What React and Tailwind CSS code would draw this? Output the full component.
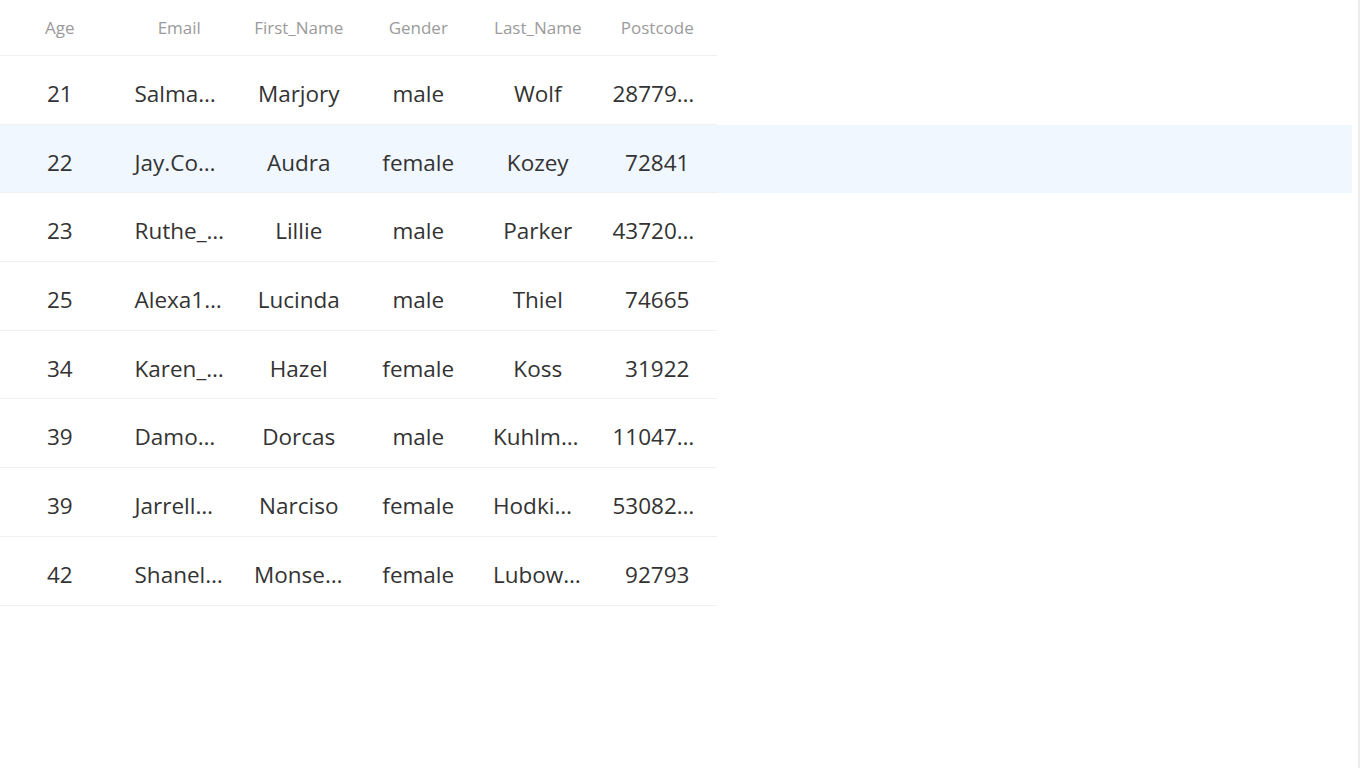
const columns = ['Age', 'Email', 'First_Name', 'Gender', 'Last_Name', 'Postcode'];

// visible (already clipped) cell text, as it shows in the grid
const rows = [
  ['21', 'Salma…', 'Marjory', 'male', 'Wolf', '28779…'],
  ['22', 'Jay.Co…', 'Audra', 'female', 'Kozey', '72841'],
  ['23', 'Ruthe_…', 'Lillie', 'male', 'Parker', '43720…'],
  ['25', 'Alexa1…', 'Lucinda', 'male', 'Thiel', '74665'],
  ['34', 'Karen_…', 'Hazel', 'female', 'Koss', '31922'],
  ['39', 'Damo…', 'Dorcas', 'male', 'Kuhlm…', '11047…'],
  ['39', 'Jarrell…', 'Narciso', 'female', 'Hodki…', '53082…'],
  ['42', 'Shanel…', 'Monse…', 'female', 'Lubow…', '92793'],
];

function Cell({ children, header }) {
  if (header) {
    return (
      <div className="w-[119.5px] shrink-0 px-[15px] text-center whitespace-nowrap text-[17px] text-[#9b9b9b]">
        {children}
      </div>
    );
  }
  const clipped = children.endsWith('…');
  return (
    <div
      className={
        clipped
          ? 'w-[119.5px] shrink-0 px-[15px] text-left whitespace-nowrap text-[22.5px] text-[#333]'
          : 'w-[119.5px] shrink-0 px-[15px] text-center whitespace-nowrap text-[22.5px] text-[#333]'
      }
    >
      {children}
    </div>
  );
}

export default function App() {
  return (
    <div className="flex h-[768px] bg-white" style={{ fontFamily: '"Open Sans", "Noto Sans", sans-serif' }}>
      <div className="w-[1358px] shrink-0">
        {/* header */}
        <div className="flex items-center h-[56px] w-[717px] border-b border-[#f0f0f0]">
          {columns.map((c) => (
            <Cell key={c} header>
              {c}
            </Cell>
          ))}
        </div>
        {/* body */}
        {rows.map((r, i) => (
          <div key={i} className={i === 1 ? 'flex w-[1352px] bg-[#f0f7fe]' : 'flex w-[1352px]'}>
            <div className="flex items-center pt-2 h-[68.7px] w-[717px] border-b border-[#f0f0f0]">
              {r.map((v, j) => (
                <Cell key={j}>{v}</Cell>
              ))}
            </div>
          </div>
        ))}
      </div>
      <div className="w-[2px] bg-[#ececec]" />
      <div className="flex-1" />
    </div>
  );
}
